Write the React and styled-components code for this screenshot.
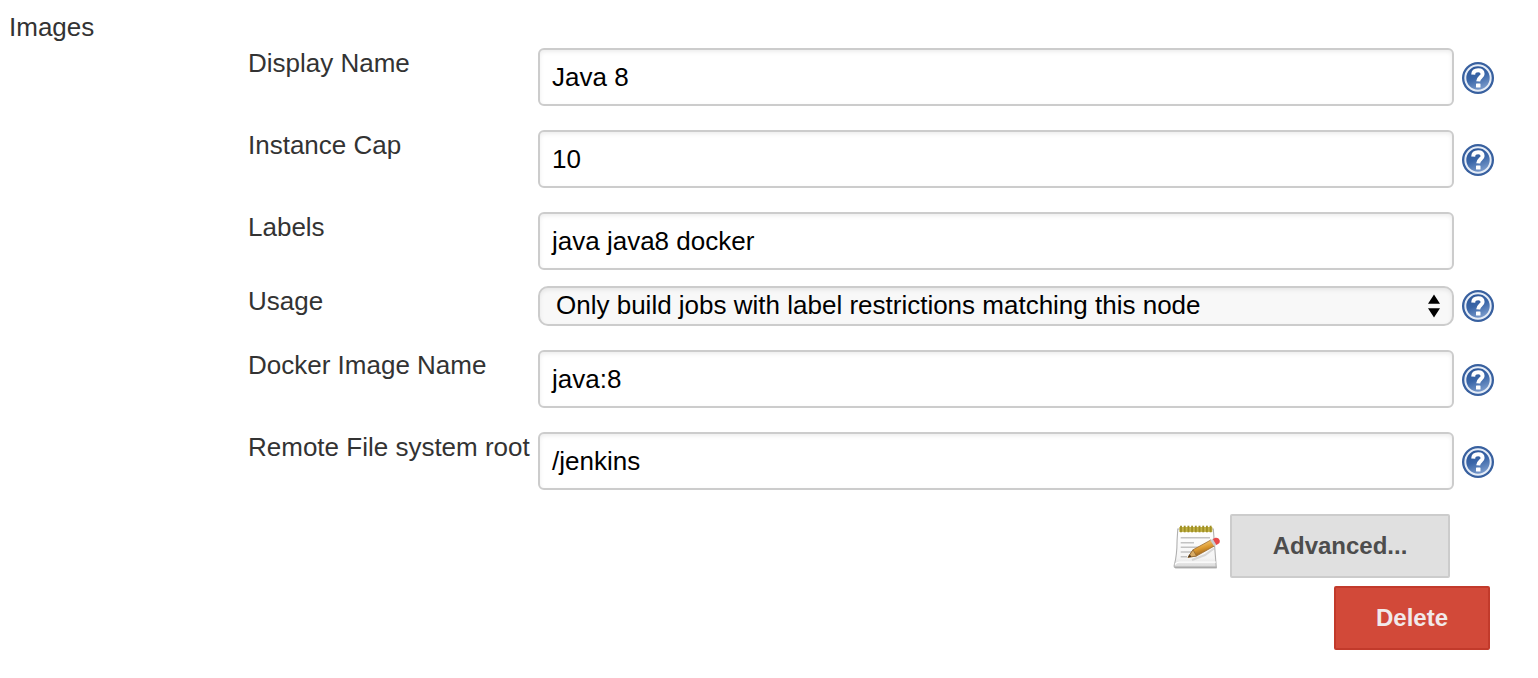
import React from "react";
import styled, { createGlobalStyle } from "styled-components";

const GlobalStyle = createGlobalStyle`
  body {
    margin: 0;
    background: #fff;
    color: #333;
    font-family: "Liberation Sans", Helvetica, Arial, sans-serif;
    font-size: 26px;
    line-height: 30px;
  }
  *, *::before, *::after { box-sizing: border-box; }
`;

const Page = styled.main`
  width: 1538px;
  height: 678px;
  padding: 12px 0 0 10px;
  overflow: hidden;
`;

const Heading = styled.div`
  height: 36px;
  margin-left: -1px;
  white-space: nowrap;
`;

const Form = styled.div`
  display: flex;
  flex-direction: column;
  padding-left: 238px;
`;

const Row = styled.div`
  display: grid;
  grid-template-columns: 290px 916px 40px;
  margin-bottom: ${(p) => p.$gap}px;
`;

const Label = styled.label`
  white-space: nowrap;
`;

const TextBox = styled.div`
  height: 58px;
  padding: 12px;
  border: 2px solid #ccc;
  border-radius: 6px;
  background: #fff;
  box-shadow: inset 0 2px 4px rgba(0, 0, 0, 0.075);
  color: #000;
  white-space: nowrap;
`;

const SelectBox = styled.div`
  display: flex;
  justify-content: space-between;
  height: 40px;
  padding: 2px 12px 0 16px;
  border: 2px solid #ccc;
  border-radius: 10px;
  background: #f8f8f8;
  box-shadow: inset 0 2px 4px rgba(0, 0, 0, 0.075);
  color: #000;
  white-space: nowrap;
`;

const Arrows = styled.svg`
  display: block;
  margin-top: 4px;
`;

const Help = styled.svg`
  display: block;
  align-self: center;
  margin: ${(p) => (p.$compact ? 0 : 2)}px 0 0 8px;
`;

const Notepad = styled.svg`
  display: block;
  margin-top: 10px;
`;

const AdvancedRow = styled.div`
  display: flex;
  justify-content: flex-end;
  width: 1202px;
  gap: 10px;
`;

const DeleteRow = styled.div`
  display: flex;
  justify-content: flex-end;
  width: 1242px;
  margin-top: 8px;
`;

const Button = styled.button`
  width: ${(p) => p.$width}px;
  height: 64px;
  padding: 0;
  border: 2px solid ${(p) => (p.$danger ? "#c23a2b" : "#ccc")};
  border-radius: 2px;
  background: ${(p) => (p.$danger ? "#d24939" : "#e0e0e0")};
  color: ${(p) => (p.$danger ? "#f1eaea" : "#4d4d4d")};
  font: bold 24px/28px "Liberation Sans", Helvetica, Arial, sans-serif;
`;

function HelpIcon({ compact }) {
  return (
    <Help $compact={compact} width="32" height="32" viewBox="0 0 32 32" aria-hidden="true">
      <defs>
        <linearGradient id="helpFill" x1="0.2" y1="0" x2="0.6" y2="1">
          <stop offset="0" stopColor="#2b5496" />
          <stop offset="0.5" stopColor="#3a66a8" />
          <stop offset="1" stopColor="#7f9fce" />
        </linearGradient>
      </defs>
      <circle cx="16" cy="16" r="16" fill="#38609f" />
      <circle cx="16" cy="16" r="12.7" fill="url(#helpFill)" stroke="#e6edf7" strokeWidth="2" />
      <path
        d="M11.2 12.6C11.3 9.4 13.2 8.3 16.2 8.3C19.3 8.3 20.6 9.8 20.6 11.9C20.6 15 16.4 15.2 16.2 19.4"
        fill="none"
        stroke="#fff"
        strokeWidth="4"
      />
      <rect x="14" y="21.4" width="4.5" height="4.2" rx="0.6" fill="#fff" />
    </Help>
  );
}

function NotepadIcon() {
  const rings = [21, 24.7, 28.4, 32.1, 35.8, 39.5, 43.2, 46.9, 50.6];
  return (
    <Notepad width="48" height="48" viewBox="12 14 48 48" aria-hidden="true">
      <defs>
        <linearGradient id="paper" x1="0" y1="0" x2="0" y2="1">
          <stop offset="0" stopColor="#ffffff" />
          <stop offset="0.75" stopColor="#f5f5f5" />
          <stop offset="1" stopColor="#d6d6d6" />
        </linearGradient>
        <linearGradient id="pencil" x1="0.3" y1="0.1" x2="0.65" y2="0.9">
          <stop offset="0.2" stopColor="#edbd64" />
          <stop offset="0.5" stopColor="#dc9930" />
          <stop offset="0.9" stopColor="#99631f" />
        </linearGradient>
      </defs>
      <path
        d="M17.8 19H53.3L56.3 57.8H16Q13.8 57.8 14.2 55.4Q17 46 17.1 30Z"
        fill="url(#paper)"
        stroke="#b0b0b0"
        strokeWidth="1.1"
      />
      <path d="M14.8 54.5Q16.8 52.2 19 52.2H55.8" fill="none" stroke="#fff" strokeWidth="1.2" />
      <path d="M15 57.4H56.4" stroke="#aaa" strokeWidth="1.6" />
      <rect x="19.3" y="17" width="33" height="4.9" fill="#c2b346" />
      {rings.map((x) => (
        <path key={x} d={`M${x} 15.7V22.3`} stroke="#a09026" strokeWidth="1.9" />
      ))}
      <path d="M20.7 27.7H50M20.7 32.7H34M20.7 37.2H40M20.7 41.9H33M20.7 46.7H27" stroke="#c2c2c2" strokeWidth="1.5" />
      <path d="M32 50L45 45L54 38.5" fill="none" stroke="#aaa" strokeWidth="2" opacity="0.4" />
      <path d="M28 47.3L33 39.8L51 29.9L54.7 35.8L36.5 46Z" fill="url(#pencil)" stroke="#9d6b2b" strokeWidth="0.8" />
      <path d="M28 47.3L33 39.8L36.5 46Z" fill="#d9ac66" stroke="#8a6332" strokeWidth="0.7" />
      <path d="M28 47.3L29.8 44.6L31.3 46.8Z" fill="#443220" />
      <path d="M50.3 30.3L53 28.8L56.7 34.7L54 36.2Z" fill="#c9ccd0" />
      <path d="M52.8 28.9L55.4 27.7Q58.5 27.3 59.6 30Q60.3 32.8 58.4 33.8L56.4 34.9Z" fill="#e8484a" />
    </Notepad>
  );
}

const fields = [
  { label: "Display Name", value: "Java 8", gap: 24, help: true },
  { label: "Instance Cap", value: "10", gap: 24, help: true },
  { label: "Labels", value: "java java8 docker", gap: 16 },
  {
    label: "Usage",
    value: "Only build jobs with label restrictions matching this node",
    gap: 24,
    help: true,
    select: true,
  },
  { label: "Docker Image Name", value: "java:8", gap: 24, help: true },
  { label: "Remote File system root", value: "/jenkins", gap: 24, help: true },
];

export default function App() {
  return (
    <>
      <GlobalStyle />
      <Page>
        <Heading>Images</Heading>
        <Form>
          {fields.map((f) => (
            <Row key={f.label} $gap={f.gap}>
              <Label>{f.label}</Label>
              {f.select ? (
                <SelectBox>
                  <span>{f.value}</span>
                  <Arrows width="12" height="24" viewBox="0 0 12 24" aria-hidden="true">
                    <path d="M6 0.5L12 9.8H0Z M0 14.2H12L6 23.5Z" fill="#000" />
                  </Arrows>
                </SelectBox>
              ) : (
                <TextBox>{f.value}</TextBox>
              )}
              {f.help && <HelpIcon compact={f.select} />}
            </Row>
          ))}
          <AdvancedRow>
            <NotepadIcon />
            <Button $width={220}>Advanced...</Button>
          </AdvancedRow>
          <DeleteRow>
            <Button $width={156} $danger>
              Delete
            </Button>
          </DeleteRow>
        </Form>
      </Page>
    </>
  );
}
